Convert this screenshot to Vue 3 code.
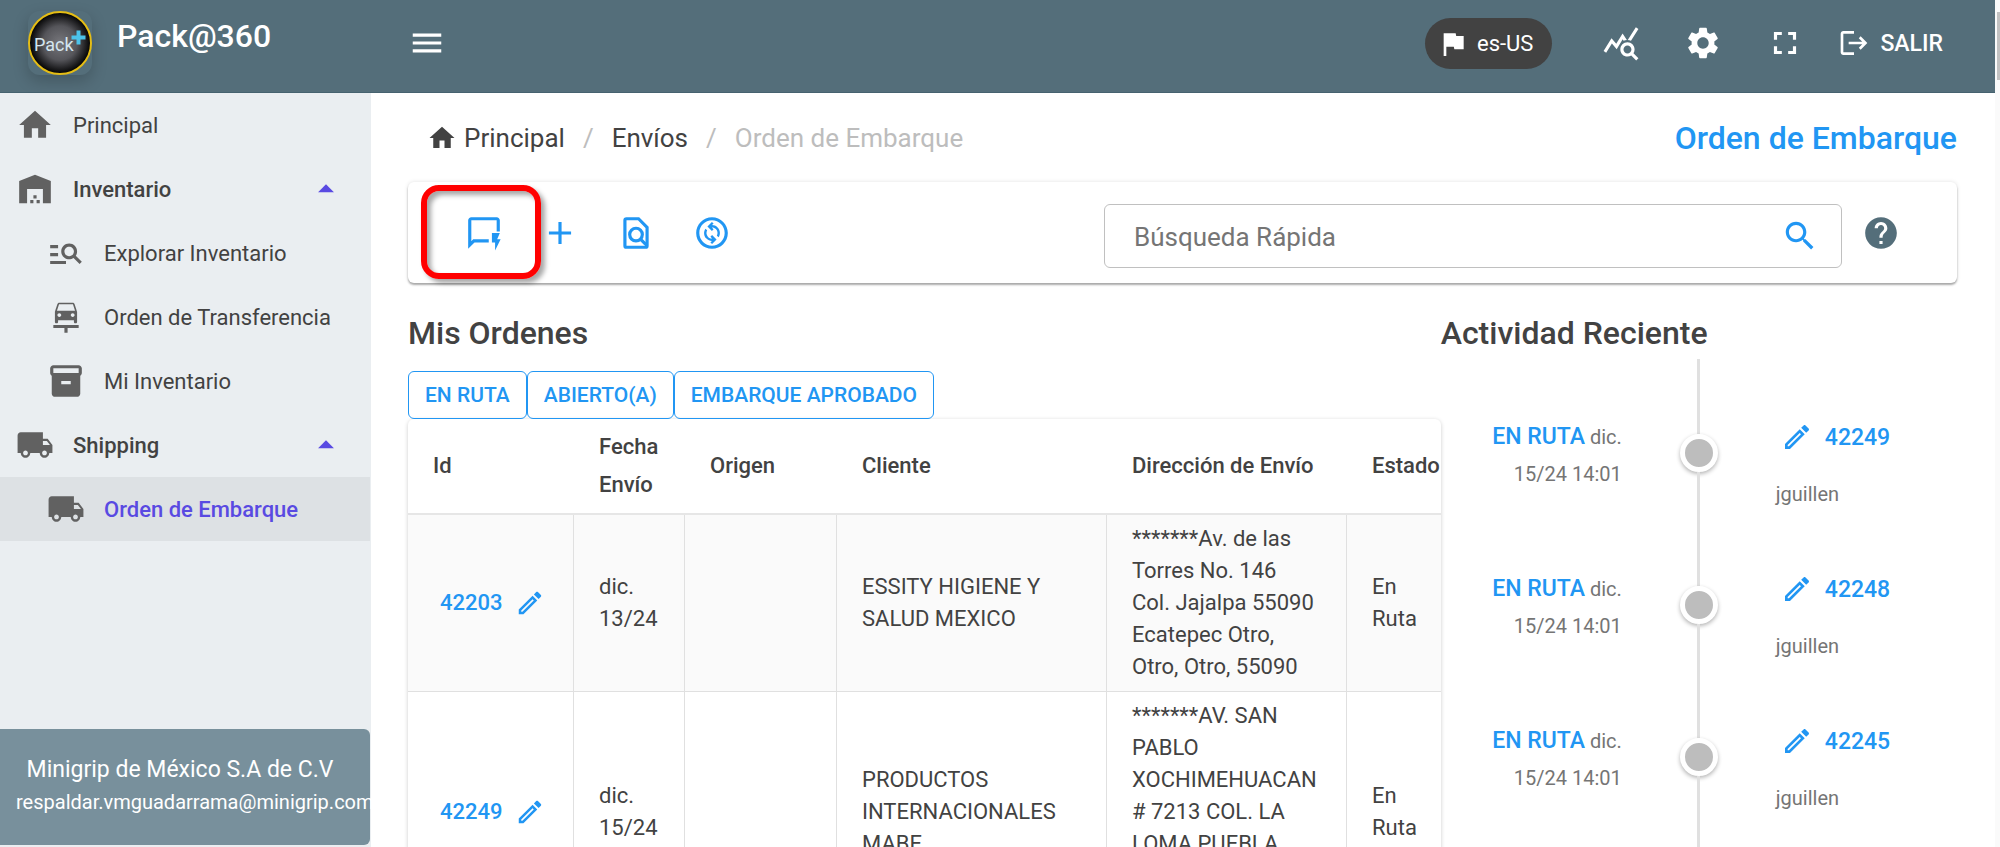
<template>
  <div class="shell">
    <div class="app">
      <header class="app-bar">
        <div class="brand">
          <svg class="logo" viewBox="0 0 64 64" role="img" aria-label="Pack+">
            <defs>
              <radialGradient id="logo-fill">
                <stop offset="0" stop-color="#77777c" />
                <stop offset="0.55" stop-color="#55555a" />
                <stop offset="0.85" stop-color="#1c1c1e" />
                <stop offset="1" stop-color="#000" />
              </radialGradient>
            </defs>
            <circle cx="32" cy="32" r="31" fill="url(#logo-fill)" stroke="#e5bd14" stroke-width="2" />
            <text x="6" y="40" class="logo-text">Pack</text>
            <path d="M48.500 19.500h4v5h5v4h-5v5h-4v-5h-5v-4h5z" fill="#4cc3ea" />
          </svg>
          <span class="brand-name">Pack@360</span>
        </div>
        <button type="button" class="bar-btn" aria-label="Menu">
          <svg class="icon" viewBox="0 0 24 24"><path :d="icons.menu" /></svg>
        </button>
        <div class="bar-actions">
          <button type="button" class="lang-chip">
            <svg class="icon icon-sm" viewBox="0 0 24 24"><path :d="icons.flag" /></svg>
            es-US
          </button>
          <button type="button" class="bar-btn" aria-label="Estadísticas">
            <svg class="icon" viewBox="0 0 24 24"><path :d="icons.stats" /></svg>
          </button>
          <button type="button" class="bar-btn" aria-label="Configuración">
            <svg class="icon" viewBox="0 0 24 24"><path :d="icons.settings" /></svg>
          </button>
          <button type="button" class="bar-btn" aria-label="Pantalla completa">
            <svg class="icon" viewBox="0 0 24 24"><path :d="icons.fullscreen" /></svg>
          </button>
          <button type="button" class="logout-btn">
            <svg class="icon icon-sm" viewBox="0 0 24 24"><path :d="icons.logout" /></svg>
            SALIR
          </button>
        </div>
      </header>

      <div class="body">
        <aside class="sidebar">
          <nav class="nav">
            <a
              v-for="item in navItems"
              :key="item.label"
              href="#"
              class="nav-link"
              :class="{ child: item.child, group: item.group, active: item.active }"
              @click.prevent
            >
              <svg class="icon" viewBox="0 0 24 24"><path :d="icons[item.icon]" /></svg>
              <span>{{ item.label }}</span>
              <svg v-if="item.group" class="icon caret" viewBox="0 0 24 24"><path d="M7 14l5-5 5 5z" /></svg>
            </a>
          </nav>
          <div class="account">
            <div class="account-name">Minigrip de México S.A de C.V</div>
            <div class="account-mail">respaldar.vmguadarrama@minigrip.com</div>
          </div>
        </aside>

        <main class="content">
          <div class="page-head">
            <nav class="breadcrumbs">
              <a href="#" @click.prevent>
                <svg class="icon icon-md" viewBox="0 0 24 24"><path :d="icons.home" /></svg>
                Principal
              </a>
              <span class="sep">/</span>
              <a href="#" @click.prevent>Envíos</a>
              <span class="sep">/</span>
              <span class="current">Orden de Embarque</span>
            </nav>
            <h1>Orden de Embarque</h1>
          </div>

          <div class="toolbar">
            <div class="tools">
              <button type="button" class="tool-btn" aria-label="Orden rápida">
                <svg class="icon" viewBox="0 0 24 24"><path :d="icons.quick" /></svg>
                <span class="highlight"></span>
              </button>
              <button type="button" class="tool-btn" aria-label="Agregar">
                <svg class="icon" viewBox="0 0 24 24"><path :d="icons.add" /></svg>
              </button>
              <button type="button" class="tool-btn" aria-label="Buscar en página">
                <svg class="icon icon-line" viewBox="0 0 24 24">
                  <path d="M13.600 3H6c-.55 0-1 .45-1 1v16c0 .55.45 1 1 1h12c.55 0 1-.45 1-1V8.400z" />
                  <circle cx="12" cy="13" r="4" />
                  <path d="M14.800 15.800l4.200 4.200" />
                </svg>
              </button>
              <button type="button" class="tool-btn" aria-label="Actualizar">
                <svg class="icon" viewBox="0 0 24 24"><path :d="icons.change" /></svg>
              </button>
            </div>
            <div class="search">
              <input v-model="search" type="text" placeholder="Búsqueda Rápida" aria-label="Búsqueda Rápida" />
              <button type="button" class="search-btn" aria-label="Buscar">
                <svg class="icon" viewBox="0 0 24 24"><path :d="icons.search" /></svg>
              </button>
            </div>
            <button type="button" class="help-btn" aria-label="Ayuda">
              <svg class="icon" viewBox="0 0 24 24"><path :d="icons.help" /></svg>
            </button>
          </div>

          <div class="panels">
            <section class="orders">
              <h2>Mis Ordenes</h2>
              <div class="filters">
                <button v-for="f in filters" :key="f" type="button" class="filter-btn">{{ f }}</button>
              </div>
              <div class="table-card">
                <table>
                  <colgroup>
                    <col v-for="c in columns" :key="c.label" :style="{ width: c.width + 'px' }" />
                  </colgroup>
                  <thead>
                    <tr>
                      <th v-for="c in columns" :key="c.label">{{ c.label }}</th>
                    </tr>
                  </thead>
                  <tbody>
                    <tr v-for="o in orders" :key="o.id">
                      <td>
                        <a href="#" class="order-link" @click.prevent>
                          {{ o.id }}
                          <svg class="icon icon-md" viewBox="0 0 24 24"><path :d="icons.edit" /></svg>
                        </a>
                      </td>
                      <td>{{ o.date }}</td>
                      <td>{{ o.origin }}</td>
                      <td>{{ o.client }}</td>
                      <td class="address">{{ o.address }}</td>
                      <td>{{ o.status }}</td>
                    </tr>
                  </tbody>
                </table>
              </div>
            </section>

            <section class="activity">
              <h2>Actividad Reciente</h2>
              <ul class="timeline">
                <li v-for="a in activity" :key="a.id">
                  <div class="when"><strong>{{ a.status }}</strong> {{ a.date }}</div>
                  <div class="track">
                    <span class="line"></span>
                    <span class="dot"></span>
                    <span class="line rest"></span>
                  </div>
                  <div class="what">
                    <a href="#" class="activity-link" @click.prevent>
                      <svg class="icon icon-sm" viewBox="0 0 24 24"><path :d="icons.edit" /></svg>
                      {{ a.id }}
                    </a>
                    <div class="user">{{ a.user }}</div>
                  </div>
                </li>
              </ul>
            </section>
          </div>
        </main>
      </div>
    </div>
    <div class="scrollbar"><div class="thumb"></div></div>
  </div>
</template>

<script setup>
import { ref } from 'vue'

const search = ref('')

const icons = {
  menu: 'M3 18h18v-2H3v2zm0-5h18v-2H3v2zm0-7v2h18V6H3z',
  flag: 'M14.4 6L14 4H5v17h2v-7h5.600l.4 2h7V6z',
  stats: 'M19.880 18.470c.44-.7.7-1.510.7-2.390 0-2.490-2.010-4.500-4.500-4.500s-4.500 2.010-4.500 4.500 2.010 4.500 4.490 4.500c.88 0 1.700-.26 2.390-.7L21.580 23 23 21.580l-3.120-3.110zm-3.800.11c-1.380 0-2.500-1.120-2.500-2.500 0-1.380 1.120-2.500 2.500-2.500s2.500 1.120 2.500 2.500c0 1.380-1.120 2.500-2.500 2.500zm-.36-8.500c-.74.02-1.450.18-2.100.45l-.55-.83-3.800 6.180-3.010-3.520-3.630 5.810L1 17l5-8 3 3.500L13 6l2.720 4.080zm2.590.5c-.64-.28-1.330-.45-2.050-.49L21.380 2 23 3.180l-4.690 7.400z',
  settings: 'M19.140 12.940c.04-.3.06-.61.06-.94 0-.32-.02-.64-.07-.94l2.030-1.580c.18-.14.23-.41.12-.61l-1.920-3.320c-.12-.22-.37-.29-.59-.22l-2.390.96c-.5-.38-1.030-.7-1.620-.94l-.36-2.540c-.04-.24-.24-.41-.48-.41h-3.840c-.24 0-.43.17-.47.41l-.36 2.540c-.59.24-1.130.57-1.620.94l-2.390-.96c-.22-.08-.47 0-.59.22L2.740 8.870c-.12.21-.08.47.12.61l2.030 1.580c-.05.3-.09.63-.09.94s.02.64.07.94l-2.030 1.580c-.18.14-.23.41-.12.61l1.920 3.320c.12.22.37.29.59.22l2.390-.96c.5.38 1.030.7 1.620.94l.36 2.540c.05.24.24.41.48.41h3.840c.24 0 .44-.17.47-.41l.36-2.540c.59-.24 1.130-.56 1.620-.94l2.390.96c.22.08.47 0 .59-.22l1.920-3.320c.12-.22.07-.47-.12-.61l-2.010-1.580zM12 15.600c-1.980 0-3.600-1.620-3.600-3.600s1.620-3.600 3.600-3.600 3.600 1.620 3.600 3.600-1.620 3.600-3.600 3.600z',
  fullscreen: 'M7 14H5v5h5v-2H7v-3zm-2-4h2V7h3V5H5v5zm12 7h-3v2h5v-5h-2v3zM14 5v2h3v3h2V5h-5z',
  logout: 'M17 7l-1.410 1.410L18.170 11H8v2h10.170l-2.580 2.580L17 17l5-5zM4 5h8V3H4c-1.100 0-2 .9-2 2v14c0 1.100.9 2 2 2h8v-2H4V5z',
  home: 'M10 20v-6h4v6h5v-8h3L12 3 2 12h3v8z',
  warehouse: 'M2 21V7l10-4 10 4v14h-5v-9H7v9zM11 19H9v2h2zM13 16h-2v2h2zM15 19h-2v2h2z',
  explore: 'M7 9H2V7h5v2zm0 3H2v2h5v-2zm13.590 7l-3.830-3.830c-.8.52-1.740.83-2.760.83-2.760 0-5-2.240-5-5s2.240-5 5-5 5 2.240 5 5c0 1.020-.31 1.960-.83 2.750L22 17.590 20.590 19zM17 11c0-1.650-1.350-3-3-3s-3 1.350-3 3 1.350 3 3 3 3-1.350 3-3zM2 19h10v-2H2v2z',
  transfer: 'M16.220 12c.68 0 1.220-.54 1.220-1.220 0-.67-.54-1.220-1.220-1.220S15 10.110 15 10.780c0 .68.55 1.220 1.220 1.220zM6.560 10.780c0 .67.54 1.220 1.220 1.220S9 11.460 9 10.780c0-.67-.54-1.220-1.220-1.220s-1.220.55-1.220 1.220zM7.610 4L6.280 8h11.430l-1.330-4H7.610zM16.280 3s.54.01.92.54c.02.02.03.04.05.07.07.11.14.24.19.4C17.660 4.660 19 8.690 19 8.690v6.500c0 .45-.35.81-.78.81h-.44c-.44 0-.78-.36-.78-.81V14H7v1.190c0 .45-.35.81-.78.81h-.44c-.43 0-.78-.36-.78-.81v-6.500s1.340-4.020 1.550-4.690c.06-.16.12-.29.19-.4C6.770 3.580 6.780 3.560 6.800 3.540 7.180 3.010 7.720 3 7.720 3h8.560zM4 17.010h16V19h-7v3h-2v-3H4v-1.990z',
  box: 'M20 2H4c-1 0-2 .9-2 2v3.010c0 .72.43 1.340 1 1.690V20c0 1.100 1.100 2 2 2h14c.9 0 2-.9 2-2V8.700c.57-.35 1-.97 1-1.690V4c0-1.100-1-2-2-2zm-5 12H9v-2h6v2zm5-7H4V4h16v3z',
  truck: 'M20 8h-3V4H3c-1.100 0-2 .9-2 2v11h2c0 1.660 1.340 3 3 3s3-1.340 3-3h6c0 1.660 1.340 3 3 3s3-1.340 3-3h2v-5l-3-4zM6 18.500c-.83 0-1.500-.67-1.500-1.500s.67-1.500 1.500-1.500 1.500.67 1.500 1.500-.67 1.500-1.500 1.500zm13.500-9l1.960 2.500H17V9.500h2.500zm-1.500 9c-.83 0-1.500-.67-1.500-1.500s.67-1.500 1.500-1.500 1.500.67 1.500 1.500-.67 1.500-1.500 1.500z',
  quick: 'M4 17.170V4h16v7h2V4c0-1.100-.9-2-2-2H4c-1.100 0-2 .9-2 2v18l4-4h9v-2H5.170zM22.500 16h-2.200l1.700-4h-5v6h2v5z',
  add: 'M19 13h-6v6h-2v-6H5v-2h6V5h2v6h6v2z',
  change: 'M12 2C6.480 2 2 6.480 2 12s4.480 10 10 10 10-4.480 10-10S17.520 2 12 2zm0 18c-4.410 0-8-3.590-8-8s3.590-8 8-8 8 3.590 8 8-3.590 8-8 8zM16.170 14.760l-1.100-1.100c.71-1.330.53-3.010-.59-4.130C13.790 8.840 12.900 8.500 12 8.500c-.03 0-.06.01-.09.01L13 9.600l-1.060 1.060-2.830-2.830L11.940 5 13 6.060l-.96.96c1.270.01 2.530.48 3.500 1.440 1.700 1.710 1.910 4.360.63 6.300zM14.890 16.170L12.060 19 11 17.940l.95-.95c-1.260-.01-2.520-.5-3.480-1.460-1.710-1.710-1.920-4.350-.64-6.290l1.100 1.100c-.71 1.330-.53 3.010.59 4.130.7.7 1.630 1.040 2.560 1.010L11 14.400l1.060-1.060 2.830 2.830z',
  search: 'M15.500 14h-.79l-.28-.27C15.410 12.590 16 11.110 16 9.500 16 5.910 13.090 3 9.500 3S3 5.910 3 9.500 5.910 16 9.500 16c1.610 0 3.090-.59 4.230-1.570l.27.28v.79l5 4.990L20.490 19l-4.990-5zm-6 0C7.010 14 5 11.990 5 9.500S7.010 5 9.500 5 14 7.010 14 9.500 11.990 14 9.500 14z',
  help: 'M12 2C6.480 2 2 6.480 2 12s4.480 10 10 10 10-4.480 10-10S17.520 2 12 2zm1 17h-2v-2h2v2zm2.070-7.750l-.9.92C13.450 12.900 13 13.500 13 15h-2v-.5c0-1.100.45-2.100 1.170-2.830l1.240-1.260c.37-.36.59-.86.59-1.410 0-1.100-.9-2-2-2s-2 .9-2 2H8c0-2.210 1.790-4 4-4s4 1.790 4 4c0 .88-.36 1.680-.93 2.250z',
  edit: 'M14.060 9.020l.92.92L5.920 19H5v-.92l9.060-9.060M17.660 3c-.25 0-.51.1-.7.29l-1.830 1.830 3.750 3.750 1.830-1.830c.39-.39.39-1.020 0-1.410l-2.340-2.340c-.2-.2-.45-.29-.71-.29zm-3.600 3.190L3 17.250V21h3.750L17.810 9.940l-3.750-3.750z',
}

const navItems = [
  { label: 'Principal', icon: 'home' },
  { label: 'Inventario', icon: 'warehouse', group: true },
  { label: 'Explorar Inventario', icon: 'explore', child: true },
  { label: 'Orden de Transferencia', icon: 'transfer', child: true },
  { label: 'Mi Inventario', icon: 'box', child: true },
  { label: 'Shipping', icon: 'truck', group: true },
  { label: 'Orden de Embarque', icon: 'truck', child: true, active: true },
]

const filters = ['EN RUTA', 'ABIERTO(A)', 'EMBARQUE APROBADO']

const columns = [
  { label: 'Id', width: 166 },
  { label: 'Fecha Envío', width: 111 },
  { label: 'Origen', width: 152 },
  { label: 'Cliente', width: 270 },
  { label: 'Dirección de Envío', width: 240 },
  { label: 'Estado', width: 110 },
]

const orders = [
  {
    id: 42203,
    date: 'dic. 13/24',
    origin: '',
    client: 'ESSITY HIGIENE Y SALUD MEXICO',
    address: '*******Av. de las\nTorres No. 146\nCol. Jajalpa 55090\nEcatepec Otro,\nOtro, Otro, 55090',
    status: 'En Ruta',
  },
  {
    id: 42249,
    date: 'dic. 15/24',
    origin: '',
    client: 'PRODUCTOS INTERNACIONALES MABE',
    address: '*******AV. SAN\nPABLO\nXOCHIMEHUACAN\n# 7213 COL. LA\nLOMA PUEBLA\nPuebla Otro,\nOtro, Otro, 72230',
    status: 'En Ruta',
  },
]

const activity = [
  { id: 42249, status: 'EN RUTA', date: 'dic. 15/24 14:01', user: 'jguillen' },
  { id: 42248, status: 'EN RUTA', date: 'dic. 15/24 14:01', user: 'jguillen' },
  { id: 42245, status: 'EN RUTA', date: 'dic. 15/24 14:01', user: 'jguillen' },
]
</script>

<style>
body {
  margin: 0;
  overflow: hidden;
}
</style>

<style scoped>
.shell {
  display: flex;
  height: 100vh;
  background: #fff;
  color: #424242;
  font-family: Roboto, 'Liberation Sans', sans-serif;
  font-size: 22px;
}

.app {
  flex: 1;
  min-width: 0;
  display: flex;
  flex-direction: column;
}

button {
  padding: 0;
  border: none;
  background: none;
  color: inherit;
  font: inherit;
  cursor: pointer;
}

a {
  color: inherit;
  text-decoration: none;
}

.icon {
  display: block;
  flex: none;
  width: 38px;
  height: 38px;
  fill: currentColor;
}

.icon-sm {
  width: 32px;
  height: 32px;
}

.icon-md {
  width: 30px;
  height: 30px;
}

.icon-line {
  fill: none;
  stroke: currentColor;
  stroke-width: 2;
}

/* Top bar */
.app-bar {
  flex: none;
  display: flex;
  align-items: flex-start;
  box-sizing: border-box;
  height: 93px;
  padding: 11px 52px 0 28px;
  border-bottom: 1px solid #46626f;
  background: #546e7a;
  color: #fff;
}

.brand {
  display: flex;
  gap: 25px;
  width: 380px;
}

.logo {
  width: 64px;
  height: 64px;
  border-radius: 12px;
  box-shadow: 0 6px 16px rgba(0, 0, 0, 0.2);
}

.logo-text {
  fill: #d5e6ef;
  font-size: 18px;
}

.brand-name {
  font-size: 32px;
  font-weight: 500;
  line-height: 50px;
}

.bar-btn {
  margin-top: 13px;
}

.bar-actions {
  display: flex;
  align-items: flex-start;
  gap: 44px;
  margin-left: auto;
}

.lang-chip {
  display: flex;
  align-items: center;
  gap: 8px;
  height: 51px;
  margin: 7px 6px 0 0;
  padding: 0 19px 0 12px;
  border-radius: 26px;
  background: #424242;
}

.logout-btn {
  display: flex;
  align-items: center;
  gap: 10px;
  height: 38px;
  margin: 13px 0 0 -10px;
  font-size: 23px;
  font-weight: 500;
}

.body {
  flex: 1;
  min-height: 0;
  display: flex;
}

/* Sidebar */
.sidebar {
  flex: none;
  display: flex;
  flex-direction: column;
  justify-content: space-between;
  width: 371px;
  background: #eaeef1;
  overflow: hidden;
}

.nav-link {
  display: flex;
  align-items: center;
  gap: 19px;
  height: 64px;
  padding: 0 26px 0 16px;
}

.nav-link .icon {
  color: #616161;
}

.nav-link.child {
  padding-left: 47px;
}

.nav-link.group {
  font-weight: 500;
}

.nav-link.active {
  margin-right: 1px;
  background: #dde1e4;
  color: #594ae2;
  font-weight: 500;
}

.nav-link .caret {
  margin-left: auto;
  color: #594ae2;
}

.account {
  margin: 0 1px 2px 0;
  padding: 24px 26px 26px 16px;
  border-radius: 0 6px 6px 0;
  background: #78909c;
  color: #fff;
  line-height: 33px;
  white-space: nowrap;
}

.account-name {
  font-size: 23px;
  text-align: center;
}

.account-mail {
  font-size: 20px;
}

/* Content */
.content {
  flex: 1;
  min-width: 0;
  padding: 0 38px 0 37px;
  overflow: hidden;
}

.page-head {
  display: flex;
  align-items: center;
  justify-content: space-between;
  height: 89px;
}

.breadcrumbs {
  display: flex;
  align-items: center;
  gap: 18px;
  padding-left: 19px;
  font-size: 26px;
}

.breadcrumbs a {
  display: flex;
  align-items: center;
  gap: 7px;
}

.sep,
.current {
  color: #bdbdbd;
}

h1 {
  margin: 0;
  color: #2196f3;
  font-size: 32px;
  font-weight: 500;
}

.toolbar {
  display: flex;
  align-items: center;
  gap: 20px;
  box-sizing: border-box;
  height: 101px;
  padding: 0 57px;
  border-radius: 6px;
  box-shadow: 0 2px 2px rgba(0, 0, 0, 0.3), 0 0 4px rgba(0, 0, 0, 0.12);
}

.tools {
  display: flex;
  gap: 38px;
  margin-right: auto;
  color: #2196f3;
}

.tool-btn {
  position: relative;
}

/* Callout ring drawn over the first tool */
.highlight {
  position: absolute;
  top: -29px;
  left: -44px;
  box-sizing: border-box;
  width: 120px;
  height: 94px;
  border: 6px solid #f00;
  border-radius: 18px;
  box-shadow: 4px 4px 5px rgba(0, 0, 0, 0.35), inset 4px 4px 5px rgba(0, 0, 0, 0.35);
  pointer-events: none;
}

.search {
  flex: 0 1 738px;
  display: flex;
  align-items: center;
  box-sizing: border-box;
  height: 64px;
  margin-top: 6px;
  padding: 0 22px 0 29px;
  border: 1px solid #c0c0c0;
  border-radius: 6px;
}

.search input {
  flex: 1;
  min-width: 0;
  padding: 2px 0 0;
  border: none;
  outline: none;
  background: none;
  color: #424242;
  font: inherit;
  font-size: 26px;
}

.search input::placeholder {
  color: #757575;
  opacity: 1;
}

.search-btn {
  color: #2196f3;
}

.help-btn {
  color: #546e7a;
}

.panels {
  display: grid;
  grid-template-columns: 2fr 1fr;
  padding-top: 25px;
}

.orders,
.activity {
  min-width: 0;
}

h2 {
  margin: 0;
  font-size: 32px;
  font-weight: 500;
  line-height: 50px;
}

.filters {
  display: flex;
  padding-top: 13px;
}

.filter-btn {
  height: 48px;
  padding: 0 16px;
  border: 1px solid #2196f3;
  border-radius: 6px;
  color: #2196f3;
  font-size: 21px;
  font-weight: 500;
}

.table-card {
  border-radius: 6px;
  box-shadow: 0 1px 4px rgba(0, 0, 0, 0.2);
  overflow: hidden;
}

table {
  width: 1049px;
  table-layout: fixed;
  border-collapse: separate;
  border-spacing: 0;
}

th {
  padding: 9px 0 9px 25px;
  border-bottom: 2px solid #e6e6e6;
  font-weight: 500;
  line-height: 38px;
  text-align: left;
}

td {
  padding: 8px 19px 8px 25px;
  border-right: 1px solid #e0e0e0;
  border-bottom: 1px solid #e0e0e0;
  line-height: 32px;
}

.address {
  white-space: pre-line;
}

tbody tr:nth-child(odd) {
  background: #fafafa;
}

.order-link {
  display: flex;
  align-items: center;
  gap: 12px;
  padding-left: 7px;
  color: #2196f3;
  font-weight: 500;
}

/* Timeline */
.timeline {
  margin: 0;
  padding: 1px 0 0;
  list-style: none;
}

.timeline li {
  display: grid;
  grid-template-columns: 1fr 38px 1fr;
  column-gap: 58px;
}

.timeline li:last-child {
  min-height: 220px;
}

.when {
  padding: 59px 0 0 48px;
  color: #757575;
  font-size: 20px;
  line-height: 37px;
  text-align: right;
}

.when strong {
  color: #2196f3;
  font-size: 23px;
  font-weight: 500;
}

.track {
  display: flex;
  flex-direction: column;
  align-items: center;
}

.line {
  width: 3px;
  height: 75px;
  background: #e0e0e0;
}

.line.rest {
  flex: 1;
  height: auto;
}

.dot {
  box-sizing: border-box;
  width: 38px;
  height: 38px;
  border: 5px solid #fff;
  border-radius: 50%;
  background: #bdbdbd;
  box-shadow: 0 2px 4px rgba(0, 0, 0, 0.3);
}

.what {
  padding: 59px 0 2px;
}

.activity-link {
  display: flex;
  align-items: center;
  gap: 12px;
  height: 38px;
  padding-left: 5px;
  color: #2196f3;
  font-size: 23px;
  font-weight: 500;
}

.user {
  padding-top: 23px;
  color: #757575;
  font-size: 20px;
  line-height: 30px;
}

.scrollbar {
  flex: none;
  width: 5px;
  padding-top: 12px;
  background: #fafafa;
}

.thumb {
  width: 3px;
  height: 68px;
  margin-left: auto;
  background: #c1c1c1;
}
</style>
